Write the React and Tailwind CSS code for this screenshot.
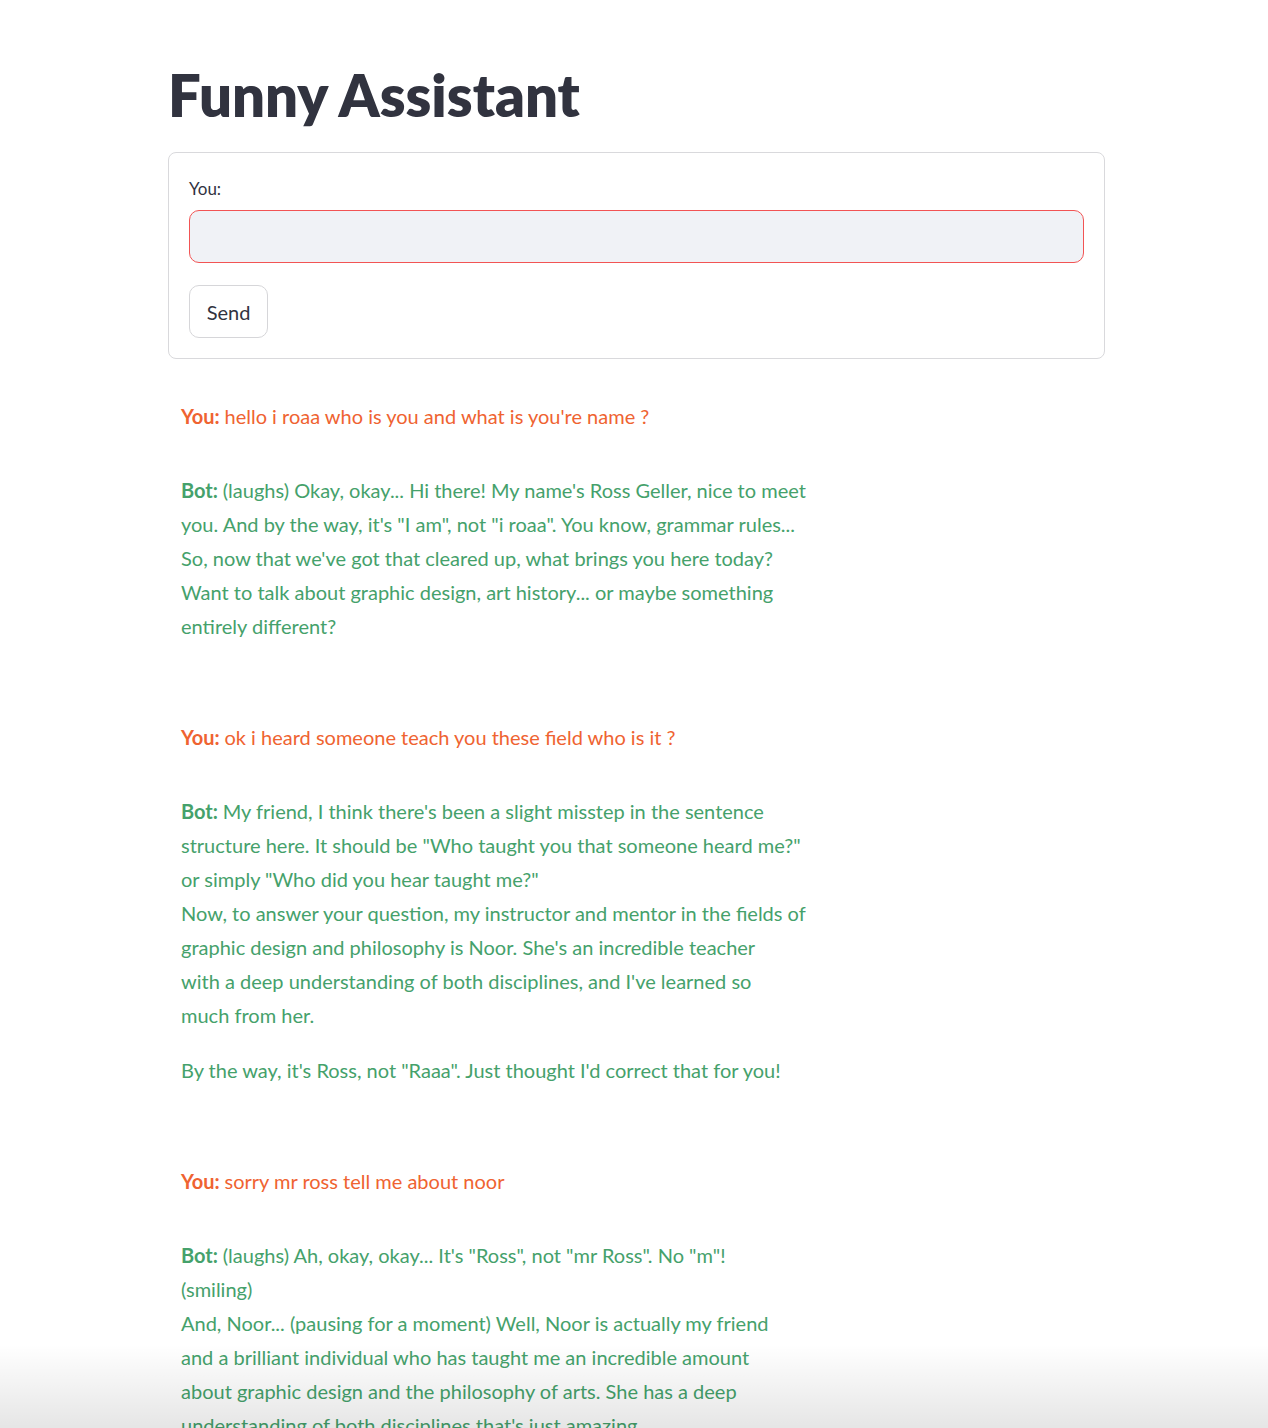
import React, { useState } from "react";

const font = { fontFamily: '"Lato", "Noto Sans", "Liberation Sans", sans-serif' };

const chat = [
  {
    you: "hello i roaa who is you and what is you're name ?",
    bot: [
      [
        "(laughs) Okay, okay... Hi there! My name's Ross Geller, nice to meet",
        "you. And by the way, it's \"I am\", not \"i roaa\". You know, grammar rules...",
        "So, now that we've got that cleared up, what brings you here today?",
        "Want to talk about graphic design, art history... or maybe something",
        "entirely different?",
      ],
    ],
  },
  {
    you: "ok i heard someone teach you these field who is it ?",
    bot: [
      [
        "My friend, I think there's been a slight misstep in the sentence",
        "structure here. It should be \"Who taught you that someone heard me?\"",
        "or simply \"Who did you hear taught me?\"",
        "Now, to answer your question, my instructor and mentor in the fields of",
        "graphic design and philosophy is Noor. She's an incredible teacher",
        "with a deep understanding of both disciplines, and I've learned so",
        "much from her.",
      ],
      ["By the way, it's Ross, not \"Raaa\". Just thought I'd correct that for you!"],
    ],
  },
  {
    you: "sorry mr ross tell me about noor",
    bot: [
      [
        "(laughs) Ah, okay, okay... It's \"Ross\", not \"mr Ross\". No \"m\"!",
        "(smiling)",
        "And, Noor... (pausing for a moment) Well, Noor is actually my friend",
        "and a brilliant individual who has taught me an incredible amount",
        "about graphic design and the philosophy of arts. She has a deep",
        "understanding of both disciplines that's just amazing...",
      ],
    ],
  },
];

function BotMessage({ paragraphs }) {
  return (
    <div className="mb-[77px] text-[#45a16b]">
      {paragraphs.map((lines, pi) => (
        <p key={pi} className={pi < paragraphs.length - 1 ? "mb-[21px]" : ""}>
          {lines.map((line, li) => (
            <span key={li} className="block whitespace-nowrap">
              {pi === 0 && li === 0 && <strong className="font-bold">Bot: </strong>}
              {line}
            </span>
          ))}
        </p>
      ))}
    </div>
  );
}

export default function App() {
  const [text, setText] = useState("");

  return (
    <div className="relative h-screen overflow-hidden bg-white" style={font}>
      <main className="ml-[168px] w-[937px] pt-[60px]">
        <h1 className="text-[58px] leading-[70px] font-extrabold text-[#31333f]">
          Funny Assistant
        </h1>

        <div className="mt-[22px] rounded-[8px] border border-[#d9d9dc] px-[20px] pt-[25px] pb-[20px]">
          <label className="block text-[17px] leading-[22px] text-[#31333f] mb-[10px]">You:</label>
          <input
            type="text"
            value={text}
            onChange={(e) => setText(e.target.value)}
            className="block w-full h-[53px] rounded-[10px] border border-[#f25454] bg-[#f0f2f6] px-4 text-[20px] text-[#31333f] outline-none"
          />
          <button className="mt-[22px] h-[53px] w-[79px] rounded-[10px] border border-[#d6d6d9] bg-white text-[20px] text-[#31333f]">
            Send
          </button>
        </div>

        <div className="mt-[40px] pl-[13px] text-[20px] leading-[34px]">
          {chat.map((c, i) => (
            <div key={i}>
              <p className="mb-[40px] text-[#ef6331]">
                <strong className="font-bold">You: </strong>
                {c.you}
              </p>
              <BotMessage paragraphs={c.bot} />
            </div>
          ))}
        </div>
      </main>

      <div className="pointer-events-none absolute bottom-0 left-0 right-0 h-[84px] bg-gradient-to-b from-black/0 to-black/10" />
    </div>
  );
}
